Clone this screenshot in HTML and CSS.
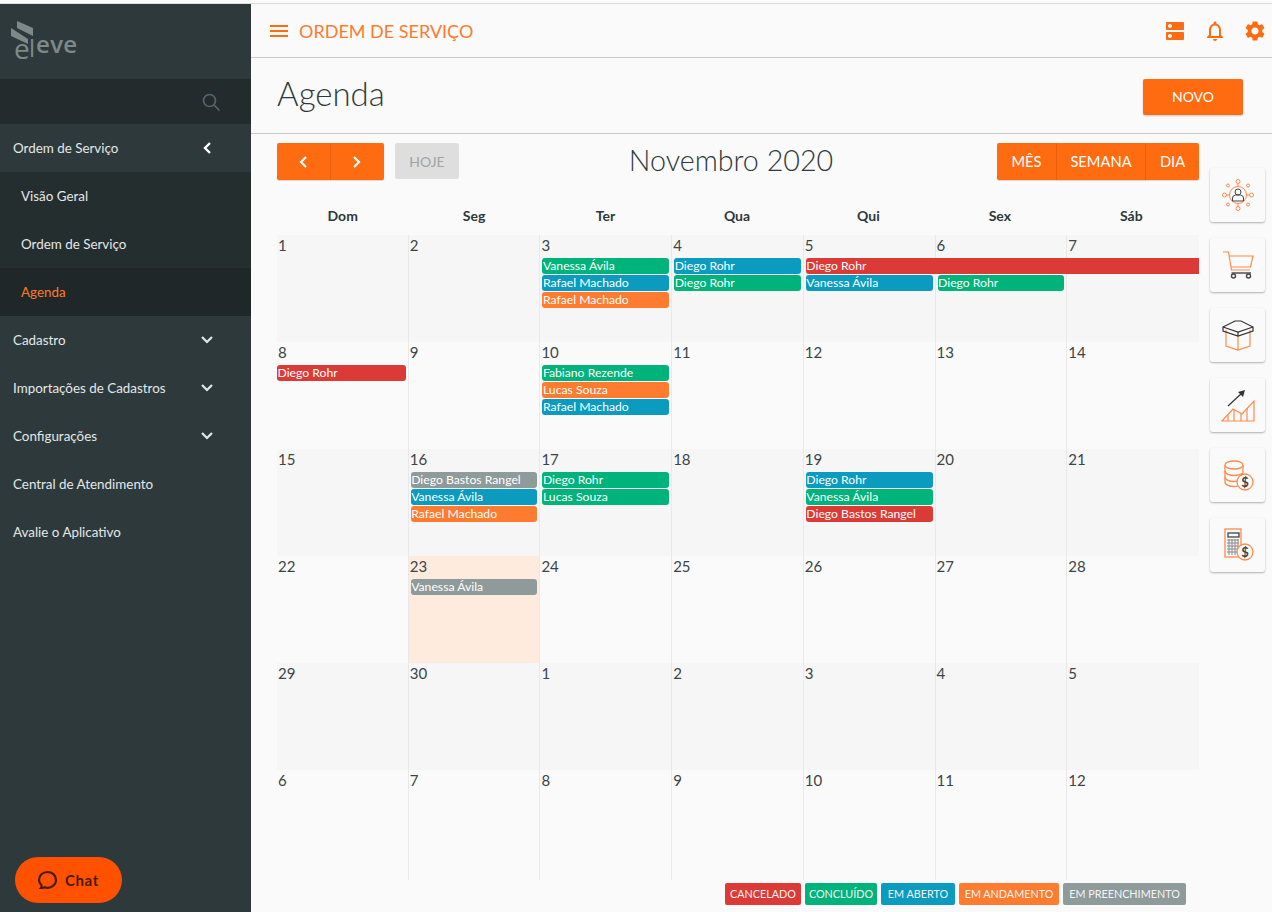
FILE: index.html
```html
<!DOCTYPE html>
<html lang="pt-BR">
<head>
<meta charset="utf-8">
<title>Agenda</title>
<link rel="stylesheet" href="styles.css">
</head>
<body>
<div class="app">
  <aside class="sidebar">
    <div class="logo">
      <svg class="logo-mark" width="24" height="26" viewBox="0 0 24 26"><polygon fill="#7e8989" points="6,1 22,8 22,16 6,8"/><polygon fill="#7e8989" points="0,8 17,19 17,24 0,16"/></svg>
      <span class="logo-e">e</span><span class="logo-l">l</span><span class="logo-rest">eve</span>
    </div>
    <div class="search">
      <svg width="20" height="20" viewBox="0 0 20 20" fill="none" stroke="#55676a" stroke-width="1.7"><circle cx="8.5" cy="8.5" r="6"/><line x1="13" y1="13" x2="18.5" y2="18.5"/></svg>
    </div>
    <nav>
      <div class="nav-item"><span>Ordem de Serviço</span><svg class="chev back" width="10" height="14" viewBox="0 0 10 14"><polyline points="8,2 3,7 8,12" fill="none" stroke="#fff" stroke-width="2.4"/></svg></div>
      <div class="nav-sub">Visão Geral</div>
      <div class="nav-sub">Ordem de Serviço</div>
      <div class="nav-sub active">Agenda</div>
      <div class="nav-item"><span>Cadastro</span><svg class="chev" width="14" height="10" viewBox="0 0 14 10"><polyline points="2,2 7,7 12,2" fill="none" stroke="#e4e8e8" stroke-width="2.2"/></svg></div>
      <div class="nav-item"><span>Importações de Cadastros</span><svg class="chev" width="14" height="10" viewBox="0 0 14 10"><polyline points="2,2 7,7 12,2" fill="none" stroke="#e4e8e8" stroke-width="2.2"/></svg></div>
      <div class="nav-item"><span>Configurações</span><svg class="chev" width="14" height="10" viewBox="0 0 14 10"><polyline points="2,2 7,7 12,2" fill="none" stroke="#e4e8e8" stroke-width="2.2"/></svg></div>
      <div class="nav-item"><span>Central de Atendimento</span></div>
      <div class="nav-item"><span>Avalie o Aplicativo</span></div>
    </nav>
    <div class="chat">
      <svg width="22" height="22" viewBox="0 0 22 22" fill="none" stroke="#4a1a00" stroke-width="2.2" stroke-linecap="round"><path d="M5 19 C6.5 19 7.5 18.6 8.5 18.3 C14 20 20 16.5 20 11 C20 6 16 3 11.5 3 C6.5 3 3 6.5 3 11 C3 13.2 4 15 5.5 16.2 C5.8 17.2 5.6 18.2 5 19 Z"/></svg>
      <span>Chat</span>
    </div>
  </aside>

  <main class="main">
    <header class="topbar">
      <svg class="burger" width="18" height="12" viewBox="0 0 18 12" fill="#ff6b11"><rect width="18" height="2"/><rect y="5" width="18" height="2"/><rect y="10" width="18" height="2"/></svg>
      <span class="module">ORDEM DE SERVIÇO</span>
      <div class="top-icons">
        <svg width="24" height="24" viewBox="0 0 24 24" fill="#ff6b11"><path d="M20 13H4c-.55 0-1 .45-1 1v6c0 .55.45 1 1 1h16c.55 0 1-.45 1-1v-6c0-.55-.45-1-1-1zM7 19c-1.1 0-2-.9-2-2s.9-2 2-2 2 .9 2 2-.9 2-2 2zM20 3H4c-.55 0-1 .45-1 1v6c0 .55.45 1 1 1h16c.55 0 1-.45 1-1V4c0-.55-.45-1-1-1zM7 9c-1.1 0-2-.9-2-2s.9-2 2-2 2 .9 2 2-.9 2-2 2z"/></svg>
        <svg width="24" height="24" viewBox="0 0 24 24" fill="#ff6b11"><path d="M12 22c1.1 0 2-.9 2-2h-4c0 1.1.9 2 2 2zm6-6v-5c0-3.07-1.63-5.64-4.5-6.32V4c0-.83-.67-1.5-1.5-1.5s-1.5.67-1.5 1.5v.68C7.64 5.36 6 7.92 6 11v5l-2 2v1h16v-1l-2-2zm-2 1H8v-6c0-2.48 1.51-4.5 4-4.5s4 2.02 4 4.5v6z"/></svg>
        <svg width="24" height="24" viewBox="0 0 24 24" fill="#ff6b11"><path d="M19.14 12.94c.04-.3.06-.61.06-.94 0-.32-.02-.64-.07-.94l2.03-1.58c.18-.14.23-.41.12-.61l-1.92-3.32c-.12-.22-.37-.29-.59-.22l-2.39.96c-.5-.38-1.03-.7-1.62-.94l-.36-2.54c-.04-.24-.24-.41-.48-.41h-3.84c-.24 0-.43.17-.47.41l-.36 2.54c-.59.24-1.13.57-1.62.94l-2.39-.96c-.22-.08-.47 0-.59.22L2.74 8.87c-.12.21-.08.47.12.61l2.03 1.58c-.05.3-.09.63-.09.94s.02.64.07.94l-2.03 1.58c-.18.14-.23.41-.12.61l1.92 3.32c.12.22.37.29.59.22l2.39-.96c.5.38 1.03.7 1.62.94l.36 2.54c.05.24.24.41.48.41h3.84c.24 0 .44-.17.47-.41l.36-2.54c.59-.24 1.13-.56 1.62-.94l2.39.96c.22.08.47 0 .59-.22l1.92-3.32c.12-.22.07-.47-.12-.61l-2.01-1.58zM12 15.6c-1.98 0-3.6-1.62-3.6-3.6s1.62-3.6 3.6-3.6 3.6 1.62 3.6 3.6-1.62 3.6-3.6 3.6z"/></svg>
      </div>
    </header>

    <section class="page-head">
      <h1>Agenda</h1>
      <button class="btn-new">NOVO</button>
    </section>

    <section class="content">
      <div class="calendar">
        <div class="toolbar">
          <div class="tool-left">
            <div class="btn-group">
              <button class="btn-nav"><svg width="10" height="14" viewBox="0 0 10 14"><polyline points="8,2 3,7 8,12" fill="none" stroke="#fff" stroke-width="2.2"/></svg></button>
              <button class="btn-nav"><svg width="10" height="14" viewBox="0 0 10 14"><polyline points="2,2 7,7 2,12" fill="none" stroke="#fff" stroke-width="2.2"/></svg></button>
            </div>
            <button class="btn-today">HOJE</button>
          </div>
          <h2>Novembro 2020</h2>
          <div class="btn-group views">
            <button class="btn-view v1">MÊS</button>
            <button class="btn-view v2">SEMANA</button>
            <button class="btn-view v3">DIA</button>
          </div>
        </div>

        <div class="dow">
          <div>Dom</div><div>Seg</div><div>Ter</div><div>Qua</div><div>Qui</div><div>Sex</div><div>Sáb</div>
        </div>

        <div class="week shaded">
          <div class="day d1">1</div><div class="day d2">2</div><div class="day d3">3</div><div class="day d4">4</div><div class="day d5">5</div><div class="day d6">6</div><div class="day d7">7</div>
          <div class="ev green d3 r1">Vanessa Ávila</div>
          <div class="ev blue d3 r2">Rafael Machado</div>
          <div class="ev orange d3 r3">Rafael Machado</div>
          <div class="ev blue d4 r1">Diego Rohr</div>
          <div class="ev green d4 r2">Diego Rohr</div>
          <div class="ev red d5 r1 span3">Diego Rohr</div>
          <div class="ev blue d5 r2">Vanessa Ávila</div>
          <div class="ev green d6 r2">Diego Rohr</div>
        </div>

        <div class="week">
          <div class="day d1">8</div><div class="day d2">9</div><div class="day d3">10</div><div class="day d4">11</div><div class="day d5">12</div><div class="day d6">13</div><div class="day d7">14</div>
          <div class="ev red d1 r1 first">Diego Rohr</div>
          <div class="ev green d3 r1">Fabiano Rezende</div>
          <div class="ev orange d3 r2">Lucas Souza</div>
          <div class="ev blue d3 r3">Rafael Machado</div>
        </div>

        <div class="week shaded">
          <div class="day d1">15</div><div class="day d2">16</div><div class="day d3">17</div><div class="day d4">18</div><div class="day d5">19</div><div class="day d6">20</div><div class="day d7">21</div>
          <div class="ev grey d2 r1">Diego Bastos Rangel</div>
          <div class="ev blue d2 r2">Vanessa Ávila</div>
          <div class="ev orange d2 r3">Rafael Machado</div>
          <div class="ev green d3 r1">Diego Rohr</div>
          <div class="ev green d3 r2">Lucas Souza</div>
          <div class="ev blue d5 r1">Diego Rohr</div>
          <div class="ev green d5 r2">Vanessa Ávila</div>
          <div class="ev red d5 r3">Diego Bastos Rangel</div>
        </div>

        <div class="week">
          <div class="day d1">22</div><div class="day d2 today">23</div><div class="day d3">24</div><div class="day d4">25</div><div class="day d5">26</div><div class="day d6">27</div><div class="day d7">28</div>
          <div class="ev grey d2 r1">Vanessa Ávila</div>
        </div>

        <div class="week shaded">
          <div class="day d1">29</div><div class="day d2">30</div><div class="day d3">1</div><div class="day d4">2</div><div class="day d5">3</div><div class="day d6">4</div><div class="day d7">5</div>
        </div>

        <div class="week last">
          <div class="day d1">6</div><div class="day d2">7</div><div class="day d3">8</div><div class="day d4">9</div><div class="day d5">10</div><div class="day d6">11</div><div class="day d7">12</div>
        </div>

        <div class="legend">
          <span class="tag red t1">CANCELADO</span>
          <span class="tag green t2">CONCLUÍDO</span>
          <span class="tag blue t3">EM ABERTO</span>
          <span class="tag orange t4">EM ANDAMENTO</span>
          <span class="tag grey t5">EM PREENCHIMENTO</span>
        </div>
      </div>

      <div class="tiles">
        <div class="tile">
          <svg width="34" height="34" viewBox="0 0 34 34" fill="none" stroke="#fe8a4d" stroke-width="1"><circle cx="17" cy="17" r="8.5"/><circle cx="17" cy="3.5" r="2"/><circle cx="17" cy="30.5" r="2"/><circle cx="3.5" cy="17" r="2"/><circle cx="30.5" cy="17" r="2"/><circle cx="7" cy="7.5" r="1.5"/><circle cx="27" cy="7.5" r="1.5"/><circle cx="7" cy="26.5" r="1.5"/><circle cx="27" cy="26.5" r="1.5"/><line x1="17" y1="5.5" x2="17" y2="8.5"/><line x1="17" y1="25.5" x2="17" y2="28.5"/><line x1="5.5" y1="17" x2="8.5" y2="17"/><line x1="25.5" y1="17" x2="28.5" y2="17"/><g stroke="#444"><circle cx="17" cy="14" r="3"/><path d="M11.5 23 v-3 q0 -2.5 3 -3 h5 q3 .5 3 3 v3 z"/></g></svg>
        </div>
        <div class="tile">
          <svg width="34" height="34" viewBox="0 0 34 34" fill="none" stroke="#fe8a4d" stroke-width="1.2"><path d="M2 4 H7.5 L10.5 22 H29"/><path d="M8 8 H32 L29.5 19 H10"/><g stroke="#444" stroke-width="1.4"><circle cx="12.5" cy="28" r="2"/><circle cx="27.5" cy="28" r="2"/><line x1="10.5" y1="25" x2="30" y2="25"/></g></svg>
        </div>
        <div class="tile">
          <svg width="34" height="34" viewBox="0 0 34 34" fill="none" stroke="#fe8a4d" stroke-width="1.2"><path d="M5 12 V28 L17 32 L29 28 V12"/><line x1="17" y1="18" x2="17" y2="32"/><g stroke="#333"><path d="M2 9 L14 3 L20 3 L32 9 L32 13 L17 18 L2 13 Z"/><path d="M2 9 L17 14 L32 9"/><line x1="17" y1="14" x2="17" y2="18"/></g></svg>
        </div>
        <div class="tile">
          <svg width="34" height="34" viewBox="0 0 34 34" fill="none" stroke="#fe8a4d" stroke-width="1.2"><path d="M1 33 L12 21 L21 26 L33 13 V33 Z"/><line x1="7" y1="27" x2="7" y2="33"/><line x1="13" y1="22" x2="13" y2="33"/><line x1="20" y1="26" x2="20" y2="33"/><line x1="26" y1="20" x2="26" y2="33"/><g stroke="#333"><line x1="7" y1="18" x2="21" y2="5"/></g><polygon fill="#333" stroke="none" points="17,4 24,2 22,9"/></svg>
        </div>
        <div class="tile">
          <svg width="34" height="34" viewBox="0 0 34 34" fill="none" stroke="#fe8a4d" stroke-width="1.3"><ellipse cx="13" cy="7" rx="9" ry="4"/><path d="M4 7 V24 C4 27 9 28.5 13 28.5 C15 28.5 16 28.3 17 28"/><path d="M22 7 V15"/><path d="M4 13 C4 16 9 17.5 13 17.5 C16 17.5 20 16.5 22 15"/><path d="M4 19 C4 22 9 23.5 13 23.5 C14.5 23.5 15 23.4 16 23.2"/><circle cx="24" cy="24" r="8" fill="#fafafa"/><text x="24" y="28.5" class="dollar">$</text></svg>
        </div>
        <div class="tile">
          <svg width="34" height="34" viewBox="0 0 34 34" fill="none" stroke="#fe8a4d" stroke-width="1.3"><rect x="4" y="1" width="16" height="28"/><rect x="7" y="5" width="11" height="4" stroke="#444"/><path d="M6 12 H18 M6 15 H18 M6 18 H18 M6 21 H18 M6 24 H18 M8 11 V27 M11 11 V27 M14 11 V27 M17 11 V27" stroke="#888" stroke-width="1"/><circle cx="24" cy="24" r="8" fill="#fafafa"/><text x="24" y="28.5" class="dollar">$</text></svg>
        </div>
      </div>
    </section>
  </main>
</div>
</body>
</html>
```

FILE: styles.css
```css
* { box-sizing: border-box; }
html, body { margin: 0; height: 912px; overflow: hidden; }
body {
  background: #fafafa;
  padding-top: 3px;
  font-family: Lato, "Open Sans", sans-serif;
  color: #2e393b;
}
.app { display: flex; height: 909px; border-top: 1px solid #dcdcdc; }

/* Sidebar */
.sidebar {
  width: 251px;
  flex: none;
  background: #2e393b;
  display: flex;
  flex-direction: column;
  position: relative;
}
.logo {
  height: 75px;
  position: relative;
  color: #7e8989;
  font-family: "Open Sans", sans-serif;
}
.logo-mark { position: absolute; left: 11px; top: 16px; }
.logo-e { position: absolute; left: 14px; top: 28px; font-size: 28px; line-height: 32px; }
.logo-l { position: absolute; left: 29px; top: 28px; font-size: 24px; line-height: 32px; }
.logo-rest { position: absolute; left: 36px; top: 24px; font-size: 24px; font-weight: 600; line-height: 32px; letter-spacing: .3px; }
.search {
  height: 45px;
  background: #232b2c;
  display: flex;
  align-items: center;
  justify-content: flex-end;
  padding: 1px 30px 0 0;
}
.nav-item, .nav-sub {
  height: 48px;
  display: flex;
  align-items: center;
  justify-content: space-between;
  font-size: 13.4px;
  color: #e4e8e8;
}
.nav-item { padding: 0 37px 0 13px; }
.nav-sub { padding: 0 0 0 21px; background: #252e2f; }
.nav-sub.active { background: #1f2728; color: #ff7a2d; }
.chev.back { margin-right: 2px; }
.chat {
  position: absolute;
  left: 15px;
  top: 853px;
  width: 107px;
  height: 46px;
  border-radius: 23px;
  background: #ff5100;
  color: #4a1a00;
  display: flex;
  align-items: center;
  gap: 7px;
  padding-left: 21px;
  font-size: 15px;
  font-weight: 700;
  letter-spacing: .6px;
}

/* Main */
.main { flex: 1; min-width: 0; display: flex; flex-direction: column; }
.topbar {
  height: 54px;
  border-bottom: 1px solid #c9c9c9;
  display: flex;
  align-items: center;
  padding: 0 5px 0 19px;
  flex: none;
}
.burger { margin-right: 11px; }
.module { font-size: 18px; color: #ff7a2d; }
.top-icons { margin-left: auto; display: flex; align-items: center; gap: 16px; }
.page-head {
  height: 76px;
  border-bottom: 1px solid #c9c9c9;
  display: flex;
  align-items: center;
  justify-content: space-between;
  padding: 0 29px 0 26px;
  flex: none;
}
h1 { margin: 0; font-size: 33px; font-weight: 300; line-height: 1; color: #2e393b; position: relative; top: -2px; }
button { font-family: inherit; border: 0; padding: 0; }
.btn-new {
  width: 100px;
  height: 36px;
  background: #ff6b11;
  color: #fff;
  font-size: 14px;
  border-radius: 2px;
  box-shadow: 0 1px 2px rgba(0,0,0,.2);
  position: relative;
  top: 1px;
}
.content { display: flex; flex: 1; }
.calendar { margin-left: 26px; width: 922px; padding-top: 9px; flex: none; }
.toolbar { display: flex; align-items: flex-start; justify-content: space-between; height: 37px; }
.tool-left { display: flex; gap: 11px; }
.btn-group { display: flex; }
.btn-nav {
  width: 53.5px;
  height: 37px;
  background: #ff6b11;
  display: flex;
  align-items: center;
  justify-content: center;
  box-shadow: 0 1px 1px rgba(0,0,0,.15);
}
.btn-nav:first-child { border-radius: 2px 0 0 2px; border-right: 1px solid #f0620c; }
.btn-nav:last-child { border-radius: 0 2px 2px 0; }
.btn-today {
  width: 64px;
  height: 36px;
  background: #dedede;
  color: #a3a3a3;
  font-size: 14px;
  border-radius: 2px;
}
h2 { margin: 0; font-size: 28.7px; font-weight: 300; line-height: 34px; color: #2e393b; position: relative; left: 3px; }
.btn-view {
  height: 37px;
  padding-bottom: 2px;
  background: #ff6b11;
  color: #fff;
  font-size: 14.7px;
  box-shadow: 0 1px 1px rgba(0,0,0,.15);
}
.v1 { width: 60px; border-radius: 2px 0 0 2px; border-right: 1px solid #f0620c; }
.v2 { width: 89px; border-right: 1px solid #f0620c; }
.v3 { width: 53px; border-radius: 0 2px 2px 0; }
.dow {
  display: grid;
  grid-template-columns: repeat(7, 1fr);
  height: 55px;
  padding: 27px 2px 0 0;
  text-align: center;
  font-size: 14px;
  font-weight: 700;
  line-height: 18px;
  color: #2e393b;
}

/* Weeks */
.week {
  display: grid;
  grid-template-columns: repeat(7, 1fr);
  grid-template-rows: 23px 17px 17px 17px 1fr;
  height: 107px;
}
.week.last { height: 110px; }
.week.shaded { background: #f6f6f6; }
.day {
  grid-row: 1 / -1;
  padding: 1px 0 0 1px;
  font-size: 15px;
  line-height: 18px;
  color: #3a4547;
  border-right: 1px solid #e9e9e9;
}
.day.d7 { border-right: 0; }
.day.today { background: #ffeade; }
.d1 { grid-column: 1; }
.d2 { grid-column: 2; }
.d3 { grid-column: 3; }
.d4 { grid-column: 4; }
.d5 { grid-column: 5; }
.d6 { grid-column: 6; }
.d7 { grid-column: 7; }
.r1 { grid-row: 2; }
.r2 { grid-row: 3; }
.r3 { grid-row: 4; }
.ev {
  margin: 0 3px 1px 2px;
  height: 16px;
  border-radius: 3px;
  padding-left: .5px;
  font-size: 12.2px;
  line-height: 16px;
  color: #fff;
  white-space: nowrap;
  overflow: hidden;
}
.ev.first { margin-left: 0; }
.ev.span3 { grid-column: 5 / span 3; margin-right: 0; border-radius: 3px 0 0 3px; }
.red { background: #dc3a36; }
.green { background: #00b37a; }
.blue { background: #0a9bbf; }
.orange { background: #fe7b2f; }
.grey { background: #8f9a9a; }

/* Legend */
.legend { display: flex; justify-content: flex-end; gap: 4px; margin-top: 3px; padding-right: 13px; }
.tag {
  height: 22px;
  border-radius: 2px;
  font-size: 10.8px;
  line-height: 22px;
  text-align: center;
  color: #f4f4f4;
  white-space: nowrap;
}
.t1 { width: 76px; }
.t2 { width: 72px; }
.t3 { width: 74px; }
.t4 { width: 100px; }
.t5 { width: 123px; }

/* Tiles */
.tiles { margin-left: 11px; padding-top: 34px; display: flex; flex-direction: column; gap: 16px; }
.tile {
  width: 55px;
  height: 54px;
  background: #fafafa;
  border-radius: 3px;
  box-shadow: 0 1px 2px rgba(0,0,0,.3);
  display: flex;
  align-items: center;
  justify-content: center;
}
.dollar { fill: #444; stroke: none; font-size: 13px; font-weight: 700; text-anchor: middle; font-family: Lato, sans-serif; }
```
